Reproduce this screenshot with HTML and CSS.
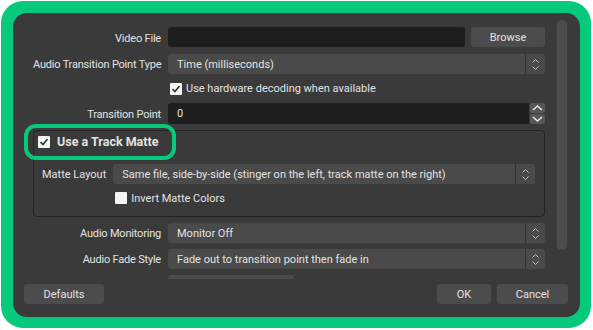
FILE: index.html
```html
<!DOCTYPE html>
<html lang="en">
<head>
  <meta charset="UTF-8">
  <title>Stinger Transition Properties</title>
  <link rel="stylesheet" href="styles.css">
</head>
<body>
  <div class="frame">
    <div class="dialog">
      <div class="scroller">
        <div class="form">
          <div class="label">Video File</div>
          <div class="file-row">
            <div class="text-input"></div>
            <button class="btn browse">Browse</button>
          </div>

          <div class="label">Audio Transition Point Type</div>
          <div class="combo">
            <span class="combo-text">Time (milliseconds)</span>
            <span class="combo-arrows">
              <svg width="7" height="4" viewBox="0 0 7 4"><polyline points="0.5,3.5 3.5,0.5 6.5,3.5"/></svg>
              <svg width="7" height="4" viewBox="0 0 7 4"><polyline points="0.5,0.5 3.5,3.5 6.5,0.5"/></svg>
            </span>
          </div>

          <div class="check-row">
            <span class="checkbox checked">
              <svg width="12" height="12" viewBox="0 0 12 12"><polyline points="2.5,6 5,8.5 9.5,3"/></svg>
            </span>
            <span>Use hardware decoding when available</span>
          </div>

          <div class="label">Transition Point</div>
          <div class="spin">
            <div class="text-input spin-input">0</div>
            <div class="spin-buttons">
              <span class="spin-btn">
                <svg width="11" height="6" viewBox="0 0 11 6"><polyline points="1,5 5.5,1 10,5"/></svg>
              </span>
              <span class="spin-btn">
                <svg width="11" height="6" viewBox="0 0 11 6"><polyline points="1,1 5.5,5 10,1"/></svg>
              </span>
            </div>
          </div>

          <div class="group">
            <div class="highlight"></div>
            <div class="group-title">
              <span class="checkbox checked">
                <svg width="12" height="12" viewBox="0 0 12 12"><polyline points="2.5,6 5,8.5 9.5,3"/></svg>
              </span>
              <span>Use a Track Matte</span>
            </div>
            <div class="group-form">
              <div class="group-label">Matte Layout</div>
              <div class="combo">
                <span class="combo-text">Same file, side-by-side (stinger on the left, track matte on the right)</span>
                <span class="combo-arrows">
                  <svg width="7" height="4" viewBox="0 0 7 4"><polyline points="0.5,3.5 3.5,0.5 6.5,3.5"/></svg>
                  <svg width="7" height="4" viewBox="0 0 7 4"><polyline points="0.5,0.5 3.5,3.5 6.5,0.5"/></svg>
                </span>
              </div>
              <div class="check-row invert">
                <span class="checkbox"></span>
                <span>Invert Matte Colors</span>
              </div>
            </div>
          </div>

          <div class="label">Audio Monitoring</div>
          <div class="combo">
            <span class="combo-text">Monitor Off</span>
            <span class="combo-arrows">
              <svg width="7" height="4" viewBox="0 0 7 4"><polyline points="0.5,3.5 3.5,0.5 6.5,3.5"/></svg>
              <svg width="7" height="4" viewBox="0 0 7 4"><polyline points="0.5,0.5 3.5,3.5 6.5,0.5"/></svg>
            </span>
          </div>

          <div class="label">Audio Fade Style</div>
          <div class="combo">
            <span class="combo-text">Fade out to transition point then fade in</span>
            <span class="combo-arrows">
              <svg width="7" height="4" viewBox="0 0 7 4"><polyline points="0.5,3.5 3.5,0.5 6.5,3.5"/></svg>
              <svg width="7" height="4" viewBox="0 0 7 4"><polyline points="0.5,0.5 3.5,3.5 6.5,0.5"/></svg>
            </span>
          </div>

          <div class="label"></div>
          <div class="next-btn"></div>
        </div>
        <div class="scrollbar"><div class="handle"></div></div>
      </div>

      <div class="footer">
        <button class="btn defaults">Defaults</button>
        <span class="spacer"></span>
        <button class="btn ok">OK</button>
        <button class="btn cancel">Cancel</button>
      </div>
    </div>
  </div>
</body>
</html>
```

FILE: styles.css
```css
body {
  margin: 0;
  background: #fff;
  font-family: Roboto, "Open Sans", sans-serif;
  font-size: 11px;
  color: #e2e2e2;
}
.frame {
  margin: 1px;
  width: 590px;
  height: 327px;
  box-sizing: border-box;
  padding: 12px 11px 11px 12px;
  background: #06c97e;
  border-radius: 22px;
}
.dialog {
  height: 100%;
  background: #3a3a3a;
  border-radius: 14px;
  display: flex;
  flex-direction: column;
}
.scroller {
  margin-top: 5px;
  height: 261px;
  overflow: hidden;
  display: flex;
}
.form {
  flex: none;
  width: 512px;
  padding: 9px 0 0 20px;
  display: grid;
  grid-template-columns: 128px 377px;
  column-gap: 7px;
  row-gap: 6px;
  align-content: start;
}
.label {
  text-align: right;
  white-space: nowrap;
  align-self: center;
  letter-spacing: -0.2px;
  padding-top: 1px;
}
.file-row {
  display: flex;
  gap: 6px;
  height: 21px;
}
.text-input {
  flex: 1;
  height: 20px;
  background: #1e1e1e;
  border-radius: 3px;
  box-sizing: border-box;
  padding-left: 9px;
  line-height: 20px;
}
.btn {
  height: 20px;
  padding: 0;
  border: none;
  border-radius: 3px;
  background: #4c4c4c;
  color: #e2e2e2;
  font: inherit;
}
.browse {
  width: 74px;
}
.combo {
  height: 20px;
  background: #4a4a4a;
  border-radius: 3px;
  display: flex;
  align-items: center;
}
.combo-text {
  flex: 1;
  padding-left: 9px;
  white-space: nowrap;
}
.combo-arrows {
  width: 19px;
  height: 100%;
  border-left: 1px solid #333;
  display: flex;
  flex-direction: column;
  align-items: center;
  justify-content: center;
  gap: 3px;
}
.combo-arrows svg polyline {
  fill: none;
  stroke: #bdbdbd;
  stroke-width: 1;
}
.check-row {
  grid-column: 2;
  display: flex;
  align-items: center;
  gap: 4px;
  height: 17px;
  padding-left: 2px;
}
.checkbox {
  width: 12px;
  height: 12px;
  background: #f4f4f4;
  border-radius: 1px;
  display: inline-flex;
}
.checkbox svg polyline {
  fill: none;
  stroke: #333;
  stroke-width: 1.6;
}
.spin {
  display: flex;
  gap: 1px;
  height: 21px;
}
.spin-input {
  height: 21px;
  line-height: 21px;
  border-radius: 3px 0 0 3px;
}
.spin-buttons {
  width: 15px;
  display: flex;
  flex-direction: column;
  gap: 1px;
}
.spin-btn {
  flex: 1;
  background: #575757;
  border-radius: 2px;
  display: flex;
  align-items: center;
  justify-content: center;
}
.spin-btn svg polyline {
  fill: none;
  stroke: #e8e8e8;
  stroke-width: 1.5;
}
.group {
  grid-column: 1 / -1;
  position: relative;
  border: 1px solid #242424;
  border-radius: 4px;
  padding: 0 9px 10px 8px;
}
.highlight {
  position: absolute;
  left: -10px;
  top: -7px;
  width: 152px;
  height: 36px;
  box-sizing: border-box;
  border: 4px solid #06c97e;
  border-radius: 12px;
}
.group-title {
  height: 21px;
  display: flex;
  align-items: center;
  gap: 7px;
  margin-left: -4px;
  font-weight: bold;
  font-size: 12.5px;
}
.group-form {
  margin-top: 12px;
  display: grid;
  grid-template-columns: auto 1fr;
  column-gap: 7px;
  row-gap: 6px;
}
.group-label {
  align-self: center;
  white-space: nowrap;
}
.invert {
  height: 16px;
}
.next-btn {
  width: 126px;
  height: 20px;
  background: #4a4a4a;
  border-radius: 3px;
}
.scrollbar {
  margin-left: 12px;
  width: 10px;
  padding-top: 2px;
}
.handle {
  height: 230px;
  background: #4d4d4d;
  border-radius: 5px;
}
.footer {
  display: flex;
  gap: 6px;
  padding: 5px 12px 13px 11px;
}
.spacer {
  flex: 1;
}
.defaults {
  width: 80px;
}
.ok {
  width: 54px;
}
.cancel {
  width: 71px;
}
```
